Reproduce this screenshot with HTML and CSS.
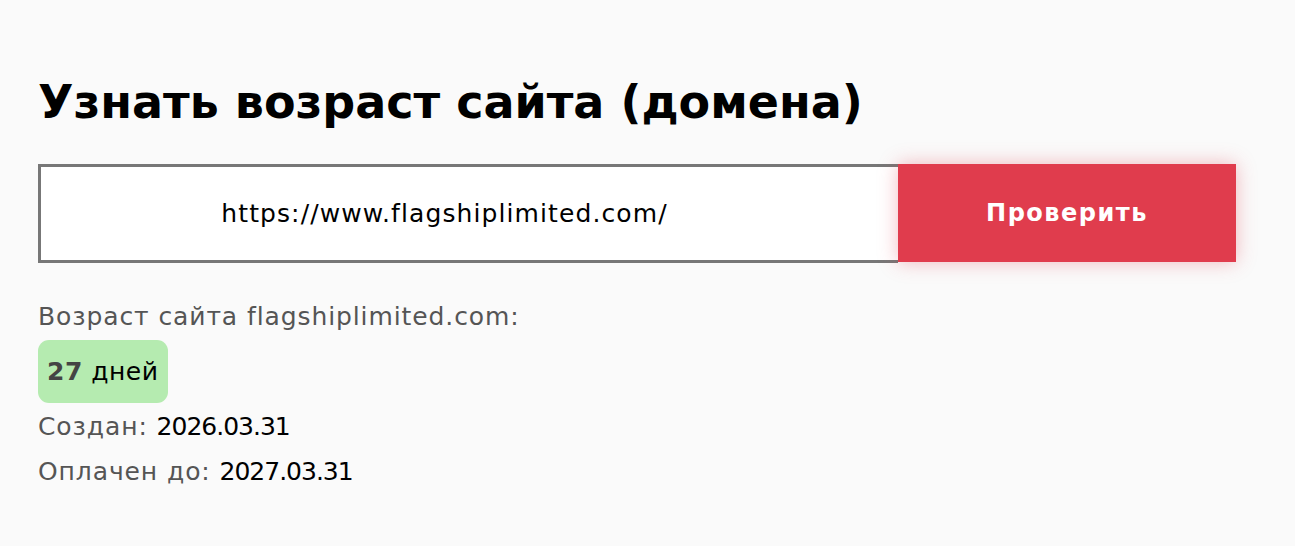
FILE: index.html
```html
<!DOCTYPE html>
<html lang="ru">

<head>
    <meta charset="UTF-8">
    <meta name="viewport" content="width=device-width, initial-scale=1.0">
    <title>Узнать возраст сайта</title>
    <link rel="stylesheet" href="styles.css">
</head>

<body>
    <div class="page">
        <h1 class="title">Узнать возраст сайта (домена)</h1>
        <form class="check-form">
            <input type="text" class="domain-input" value="https://www.flagshiplimited.com/">
            <button type="submit" class="check-btn">Проверить</button>
        </form>
        <div class="result">
            <p class="result-line">Возраст сайта flagshiplimited.com:</p>
            <div class="age-badge"><b>27</b> дней</div>
            <p class="result-line">Создан: <span class="val">2026.03.31</span></p>
            <p class="result-line">Оплачен до: <span class="val">2027.03.31</span></p>
        </div>
    </div>
</body>

</html>
```

FILE: styles.css
```css
body {
    margin: 0;
    background-color: #fafafa;
    font-family: "DejaVu Sans", "Noto Sans", sans-serif;
    color: #000;
}

.page {
    padding: 70px 38px 40px;
}

.title {
    margin: 0 0 30px;
    font-size: 46px;
    font-weight: 700;
    line-height: 64px;
}

.check-form {
    display: flex;
    width: 1198px;
}

.domain-input {
    box-sizing: border-box;
    width: 860px;
    height: 99px;
    border: 3px solid #777;
    border-right: none;
    background: #fff;
    font-family: inherit;
    font-size: 25px;
    letter-spacing: 1.1px;
    text-align: center;
    padding: 0 50px 0 0;
    color: #000;
    outline: none;
}

.check-btn {
    width: 338px;
    height: 98px;
    border: none;
    background-color: #e03c4d;
    color: #fff;
    font-family: inherit;
    font-size: 24px;
    font-weight: 700;
    letter-spacing: 1.5px;
    box-shadow: 0 0 18px rgba(224, 60, 77, 0.35);
}

.result {
    margin-top: 39px;
}

.result-line {
    margin: 0;
    font-size: 25px;
    letter-spacing: 0.9px;
    line-height: 30px;
    color: #555;
}

.val {
    color: #000;
    letter-spacing: -1px;
}

.age-badge {
    display: inline-block;
    margin: 8px 0 9px;
    padding: 0 9px;
    height: 63px;
    line-height: 63px;
    border-radius: 11px;
    background-color: #b5ebb0;
    font-size: 25px;
    letter-spacing: 0.5px;
}

.age-badge b {
    color: #444;
}

.result-line + .result-line {
    margin-top: 15px;
}
```
